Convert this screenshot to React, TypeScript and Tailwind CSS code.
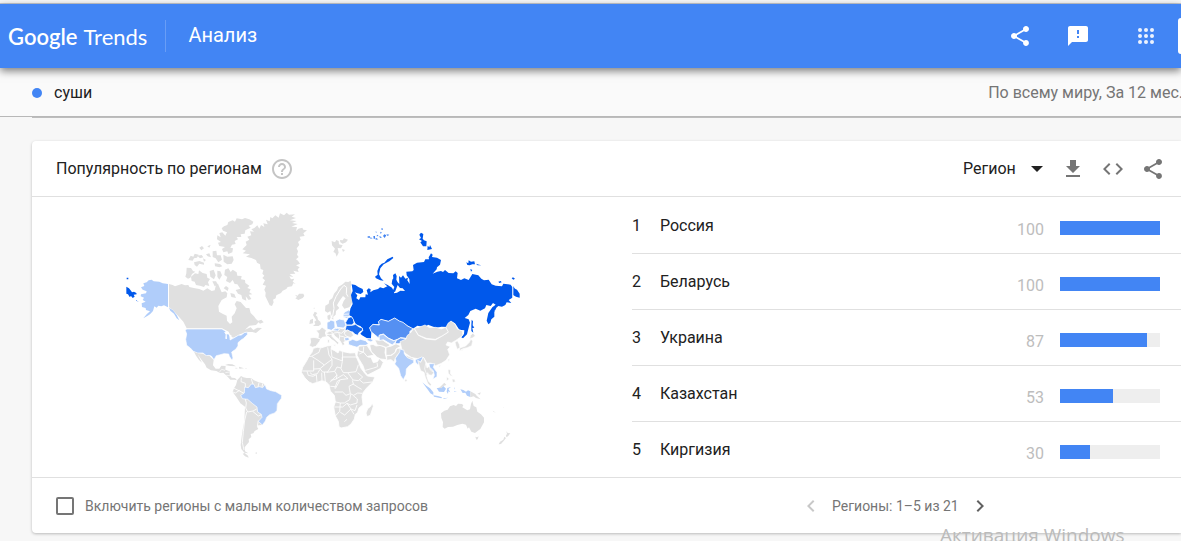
import { useState } from "react";
import {
  MdChevronLeft,
  MdChevronRight,
  MdCode,
  MdFeedback,
  MdGetApp,
  MdHelpOutline,
  MdShare,
} from "react-icons/md";

const regions = [
  { name: "Россия", value: 100 },
  { name: "Беларусь", value: 100 },
  { name: "Украина", value: 87 },
  { name: "Казахстан", value: 53 },
  { name: "Киргизия", value: 30 },
];

function AppsIcon() {
  return (
    <svg className="h-6 w-6" viewBox="0 0 24 24" fill="currentColor">
      {[6, 12, 18].map((y) =>
        [6, 12, 18].map((x) => <circle key={`${x}-${y}`} cx={x} cy={y} r="2" />)
      )}
    </svg>
  );
}

// ── World map ─────────────────────────────────────────────────────
function WorldMap() {
  return (
    <svg
      className="w-[410px] max-w-full"
      viewBox="0 0 1230 780"
      role="img"
      aria-label="Карта популярности по регионам"
      strokeLinejoin="round"
    >
      {/* Canada and the Arctic islands */}
      <g fill="#e0e0e0">
        <path d="M147 237L158 240L165 244L176 240L185 237L195 241L205 240L208 246L225 250L238 252L250 257L262 250L275 258L284 256L288 240L294 236L298 246L305 262L316 259L322 265L320 277L305 285L295 303L297 320L309 327L320 332L321 347L330 357L337 352L335 335L344 325L350 310L344 298L350 288L362 291L368 298L378 309L388 309L392 324L402 334L408 342L417 350L408 360L388 362L375 374L392 367L400 375L412 368L426 369L408 384L397 381L378 381L360 388L340 398L331 394L326 380L306 370L200 370L190 350L172 330L158 314L147 307Z" />
        <path d="M200 188L213 189L219 198L226 200L216 207L211 218L204 221L196 215L199 205Z" />
        <path d="M213 215L225 205L235 207L237 196L248 204L260 207L262 218L270 222L264 232L268 243L256 240L252 246L240 242L228 240L224 230L215 228Z" />
        <path d="M205 165L212 152L220 155L224 146L236 149L231 158L222 160L218 167Z M232 152L245 150L250 157L240 160ZM222 172L238 168L252 173L252 179L238 176L231 185L224 180Z M238 128L246 123L252 130L244 136ZM262 124L272 119L268 128ZM258 148L268 145L273 157L263 154ZM249 160L258 165L252 170Z" />
        <path d="M278 139L289 137L291 151L302 151L306 164L295 172L287 160L278 156ZM284 175L300 177L307 184L298 187L285 184ZM310 149L322 155L338 154L341 165L335 176L322 178L311 170Z M269 198L281 194L287 211L282 223L271 215ZM292 197L301 199L306 211L298 224L292 215ZM277 229L288 229L294 239L284 244Z" />
        <path d="M305 70L312 64L322 60L325 51L338 46L345 50L350 40L366 43L375 39L388 43L400 50L397 58L386 62L392 68L376 76L374 86L362 88L364 96L350 96L354 103L344 108L347 117L336 119L331 128L339 130L337 142L325 147L322 139L310 142L306 132L315 126L298 123L294 113L303 111L291 103L292 91L302 97L298 84L307 82L316 92L321 82L309 77Z" />
        <path d="M315 194L325 190L332 201L338 194L350 202L352 212L365 213L363 223L375 225L376 234L388 242L382 249L392 253L388 262L397 268L386 269L394 282L386 285L377 274L379 287L367 282L364 270L354 266L347 255L361 251L352 238L344 237L338 225L330 234L318 228L322 216L313 210Z M318 243L326 249L323 258L311 250ZM331 264L343 267L348 279L334 276Z" />
        <path d="M412 348L424 344L431 352L420 356Z" />
      </g>

      {/* Alaska and the easternmost tip of Russia */}
      <path
        fill="#b0cdfa"
        d="M70 235L80 232L86 226L95 224L101 229L118 230L128 235L144 237V307L132 301L124 304L115 302L110 308L103 304L99 318L90 328L82 333L70 340L80 328L90 319L78 315L77 309L66 306L65 295L77 290L68 285L72 278L62 274L63 268L78 265L80 259L68 254L63 247L73 243Z M147 308L159 316L170 330L178 346L170 340L162 326L151 317Z"
      />
      <path
        fill="#0058eb"
        d="M19 245L27 250L34 259L36 262L42 260L49 264L50 268L41 269L44 275L38 279L33 273L29 276L24 268L19 266ZM20 218h5v5h-5zM48 285l3 1v3zM51 287l5 3-4-1z"
      />

      {/* Greenland, Iceland, Svalbard and the north of Europe */}
      <g transform="translate(330 0)" fill="#e0e0e0">
        <path d="M50 120L37 133L48 137L38 145L60 148L48 155L64 159L78 165L81 173L90 178L92 192L100 195L97 206L103 212L97 219L105 226L98 239L108 242L103 254L107 263L106 274L113 288L119 301L126 303L131 292L129 284L137 280L139 271L153 264L158 257L169 252L173 246L186 244L190 235L197 236L188 230L193 221L183 223L178 214L190 216L179 207L196 206L190 197L206 201L203 193L209 187L198 181L210 176L204 167L198 163L206 156L201 149L204 139L200 130L208 120L204 111L212 104L209 95L224 93L220 85L231 76L220 74L217 68L205 71L198 79L201 66L184 65L203 57L186 54L200 48L180 46L198 39L185 35L195 28L177 29L170 23L162 31L150 25L146 38L136 31L127 40L121 36L119 49L108 44L113 58L100 55L103 66L93 60L88 71L82 61L73 69L64 73L72 80L60 79L64 91L52 95L58 104L47 110Z" />
        <path d="M195 269L203 272L207 266L220 266L223 273L218 279L205 285L196 280L201 276Z" />
        <path d="M305 108L315 112L319 105L326 108L327 118L338 121L333 130L323 129L326 143L320 155L316 144L310 141L315 131L306 121ZM330 105L338 106L342 100L354 104L348 112L338 116L331 112ZM336 132l9 3-6 6z" />
        <path d="M285 318L286 302L296 296L298 286L307 280L312 266L321 256L325 246L338 238L346 230L355 231L362 227L364 236L362 250L366 270L369 284L364 298L358 307L343 311L336 301L341 288L347 280L339 273L333 281L326 292L321 301L328 309L318 318L317 329L309 336L304 331L301 318L293 323Z" />
        <path d="M292 332L301 328L302 338L298 346L293 342ZM304 339l6-2v7z" />
        <path d="M254 320L262 324L257 331L262 335L264 344L271 350L273 358L266 363L249 363L256 357L253 350L259 346L253 337L249 330ZM240 345L249 341L249 355L238 357ZM250 309l4-1-1 4z" />
        <path d="M308 333L312 310L310 294L318 275L332 252L342 241L350 247L349 266L354 275" fill="none" stroke="#fff" strokeWidth="3" />
      </g>

      {/* Continental Europe, Turkey, Middle East, Africa */}
      <g transform="translate(510 315)" fill="#e0e0e0" stroke="#fff" strokeWidth="2.5">
        <path d="M60 84L72 82L92 86L89 94L82 103L78 109L67 112L58 107L62 96Z" />
        <path d="M78 61L89 59L96 51L109 61L106 69L110 80L98 82L92 87L84 84L86 71Z" />
        <path d="M108 76L119 70L126 72L126 79L136 89L147 98L142 104L136 96L124 88L116 80ZM128 104l10-1-2 6zM113 89l5-1v10l-5 1z" />
        <path d="M107 70L120 63L133 61L134 53L148 54L158 56L168 53L178 60L186 73L178 77L177 82L166 85L163 89L169 94L161 96L165 103L158 107L152 96L146 87L134 78L130 71L118 74Z" />
        <path fill="none" d="M132 69L146 67L154 70L160 65L177 69M146 67L149 78L160 80L168 84M149 78L148 88M160 65L168 55M120 63L131 71" />
        <path fill="#b0cdfa" d="M111 37L119 34L122 30L134 34L135 53L124 61L111 57ZM136 33L148 27L163 30L168 47L160 54L141 52Z" />
        <path fill="#b0cdfa" d="M159 13L164 6L176 0L182 2L182 11L176 20L171 25L160 22Z M163 84L176 82L178 91L166 93Z M130 58l12-3 7 3-6 5-12-1z" />
        <path fill="none" d="M158 13L180 12M160 19L177 19" />
        <path fill="#b0cdfa" d="M175 94L188 88L200 92L212 88L227 92L235 101L228 106L210 106L201 112L188 108L176 104ZM230 85L242 86L250 91L243 96L233 92Z" />
        <path d="M239 105L249 103L258 108L272 106L287 113L285 128L290 149L272 147L260 141L253 133L244 126Z" />
        <path d="M254 89L267 91L274 87L286 96L301 105L290 113L278 108L262 105Z" />
        <path d="M288 112L304 108L318 101L333 108L318 117L315 128L302 136L288 136Z" />
        <path d="M290 137L305 136L316 127L321 115L337 115L333 125L323 134L315 147L313 157L303 149L290 151Z" />
        <path d="M205 109L231 106L242 123L252 136L242 137L231 140L222 128L205 122Z" />
        <path d="M203 122L221 127L233 141L243 142L250 158L262 155L268 146L280 157L272 175L249 187L233 195L225 185L219 167L208 149L201 136Z" />
        <path fill="none" d="M221 110L220 126L208 132M226 181L251 174L263 170L261 158" />
        <path d="M70 115L82 112L95 113L111 108L125 106L123 117L134 122L144 129L148 121L160 125L180 129L196 128L199 141L206 157L213 175L223 188L232 198L255 201L248 216L230 234L219 248L216 260L219 284L207 294L203 307L196 313L193 327L183 342L173 350L153 354L147 350L145 334L136 318L131 291L136 276L133 256L121 243L117 224L108 215L95 212L82 217L68 221L57 216L45 204L34 187L38 172L51 151L58 137L66 127Z" />
        <path fill="none" d="M91 114L87 127L65 139L53 139M65 139L84 151L103 165L126 148L117 135L113 112M123 118L126 141L157 153L158 126M157 153V141H203M126 148L126 166L113 186L98 186L90 176L103 165M71 151V183H37M71 177L90 176M90 178L82 191L67 194L60 188M51 184L55 196L69 199L79 194L81 216M95 188L96 212M103 186L106 214M110 187L134 184L141 195L120 217M157 154L153 176L160 188L174 188L198 185L205 164M134 184L141 171L153 174M141 195L139 207L122 211M138 207L160 194L174 206L151 209L142 214L134 235M174 189L189 210L205 212L218 201L203 188M187 211L190 222L177 229L181 251L168 256L158 246L134 246M150 210L136 236M189 222L206 233L215 238M181 251L191 256L203 249L216 250M182 253L179 269L163 279L151 279L133 275M190 257L202 267L201 279L181 285L171 280M151 279L149 304L136 318M133 291L158 291L171 280L183 297L164 315L151 307M183 297L195 302L201 285M183 298L192 313M209 210L220 219L246 216M121 229L137 230M163 335L171 328" />
        <path d="M247 279L250 289L241 316L231 320L228 309L233 296L242 289Z" />
      </g>

      {/* Russia and its neighbours */}
      <g transform="translate(660 30)" fill="#0058eb">
        <path d="M35 208L46 210L55 216L68 222L70 231L62 237L50 234L44 232L52 241L49 250L57 255L61 247L76 247L77 238L84 239L80 226L86 220L92 223L91 232L100 226L114 222L120 217L130 220L142 214L151 221L140 212L132 205L143 210L156 218L160 226L163 235L171 233L181 227L195 228L188 220L180 219L173 210L165 231L158 229L163 216L155 206L157 194L160 190L159 180L166 175L170 183L169 194L173 202L178 207L177 183L183 188L189 181L196 191L204 188L202 196L209 207L208 192L200 181L199 170L217 169L221 165L219 150L231 143L252 141L256 133L267 133L266 127L273 115L278 119L276 126L291 128L303 135L300 149L291 157L290 163L278 176L292 170L303 168L309 171L315 165L326 174L340 175L347 169L353 174L351 190L363 195L373 190L386 195L397 177L415 181L424 191L432 196L446 194L455 208L467 212L486 214L490 206L512 209L517 216V248L506 255L514 264L500 262L496 270L486 275L475 273L469 278L463 291L463 305L454 313L451 323L445 328L440 317L445 294L457 277L467 269L459 264L452 273L439 270L435 280L421 287L407 281L391 288L385 300L374 309L386 313L390 323L385 342L381 358L369 370L364 367L372 357L373 346L358 344L345 325L333 319L325 326L325 336L305 335L288 338L264 329L256 337L232 332L218 342L205 333L189 324L178 318L164 309L145 318L122 313L118 328L99 327L88 338L94 350L93 370L80 369L66 361L61 356L70 346L62 334L48 328L42 318L36 305L28 301L31 281L38 267L33 240L38 228Z" />
        <path d="M519 213L525 221L531 224L539 236V248L528 245L519 240Z" />
        <path d="M105 185L113 179L112 168L118 153L125 146L133 143L142 133L158 125L160 129L148 139L131 148L121 160L117 178L123 190L131 197L121 196L108 190Z" />
        <path d="M238 59L243 53L250 57L248 71L252 76L260 79L259 94L249 94L241 82L246 78L237 73L243 69ZM263 92L268 97L270 90L276 102L262 105Z" />
        <path d="M379 142L385 145L386 136L393 140L403 139L405 148L397 148L389 151L382 150ZM408 146L417 149L424 151L413 151ZM391 162L397 165L393 170ZM515 190L519 187L525 191L520 194ZM475 200l7-2 3 4-7 2z" />
        <path d="M395 314L399 319L398 331L403 338L397 339L400 353L394 348L394 331Z" />
        <path opacity=".75" d="M83 64h7v4h-7zM91 67l7 3-7 1zM100 63h5v8h-4zM107 68l8 5-8 1zM111 59l5 4-6 1zM118 63l8 4-6 2zM121 50l5 3-5 3zM129 63l4-5 6 3-5 8zM139 58l9 1-5 4zM124 40h4v5h-3zM107 49l3 2-2 3z" />
        <path d="M149 327l5-1M463 286l2 2" stroke="#fff" />
        <g stroke="#fff" strokeWidth="2.5" strokeLinejoin="round">
          <path fill="#0b60ec" d="M17 322L25 308L34 305L40 313L42 322L37 330L19 330Z" />
          <path fill="#1969ed" d="M15 347L19 331L36 331L47 328L56 335L67 339L68 346L58 352L53 361L45 358L37 350L30 353L23 345Z" />
          <path fill="#5590f2" d="M89 338L99 328L118 330L115 320L123 313L145 319L164 309L178 318L189 322L203 333L219 341L209 350L211 357L199 370L182 368L163 378L145 369L130 357L119 360L116 369L103 358L93 350Z" />
          <path fill="#b0cdfa" d="M117 361L130 358L145 370L161 377L171 374L164 383L157 390L143 382L130 374L118 377Z" />
          <path fill="#79a8f5" d="M169 376L181 369L202 371L190 379L177 386L165 386Z" />
          <path fill="#e0e0e0" d="M23 345L35 351L41 361L32 368L18 363L12 354Z" />
        </g>
        <path d="M519 213V250" stroke="#fff" strokeWidth="2" />
      </g>

      {/* East and South Asia, Oceania */}
      <g transform="translate(780 315)" fill="#e0e0e0" stroke="#fff" strokeWidth="2">
        <path d="M60 95L78 87L81 77L91 69L102 55L115 76L138 87L166 90L186 78L204 67L198 52L204 40L213 33L225 42L232 57L247 63L248 76L238 84L226 92L214 99L203 96L198 105L211 110L203 118L209 134L198 151L184 160L167 167L153 159L141 160L132 144L112 146L94 142L79 132L66 120Z" />
        <path d="M103 55L119 51L135 45L149 53L167 52L184 57L197 52L205 66L186 78L166 88L139 85L115 75Z" />
        <path fill="#b0cdfa" d="M51 138L59 126L60 117L72 121L73 132L81 140L101 148L101 158L87 168L79 177L78 193L70 209L62 197L56 175L44 162L48 154L46 145ZM106 149L125 141L130 143L122 155L114 164L107 157Z" />
        <path d="M75 134L91 142L100 145L99 150L82 143ZM76 207L82 210L78 216L74 213Z" />
        <path d="M113 151L122 157L130 141L137 157L141 174L148 169L158 181L162 188L154 196L146 194L143 188L140 197L145 213L154 223L151 229L143 220L136 202L132 187L122 182Z" />
        <path fill="none" d="M137 160L134 177L140 193M148 169L151 180L160 186" />
        <path fill="#b0cdfa" d="M147 161L164 161L160 172L171 187L171 200L158 208L163 196L160 182L149 172Z" />
        <path d="M176 168l6-2-3 6zM204 148l5-2-3 11zM204 178L212 180L211 191L218 199L211 197L205 190ZM216 207L224 208L226 216L218 217ZM200 200l8 7-8 6z" />
        <path d="M225 97L232 92L238 103L240 113L232 118L228 108ZM272 76L279 69L286 78L277 84L269 86ZM273 86L278 94L275 107L262 113L249 116L239 123L239 114L257 108L268 97ZM243 119l8-1-5 5z" />
        <path fill="#b0cdfa" stroke="none" d="M127 217L139 227L150 235L160 247L160 255L151 250L142 237ZM160 256L174 258L186 262L184 265L162 260ZM190 265l15-2-14 4zM170 234L183 234L190 228L198 236L192 246L177 245ZM202 234L213 231L205 237L211 247L205 244L204 252L200 245ZM222 230l3 8-2-1zM222 244l9 1-8 1zM241 238L250 240L258 245L264 241L271 244V261L261 257L256 248L248 249Z" />
        <path stroke="none" d="M174 232L181 230L193 218L199 225L190 228L184 235ZM271 244L286 252L290 257L302 268L288 264L281 259L271 262ZM292 251l10-4-2 7zM307 259l4 4M315 267l7 4z" />
        <path stroke="none" d="M183 310L193 302L203 299L210 289L221 285L228 288L234 281L246 282L250 286L247 292L262 301L270 298L273 282L277 272L281 288L289 292L292 305L303 313L312 323L312 337L301 357L285 369L274 365L267 352L263 356L258 344L247 341L232 345L219 350L204 351L194 356L188 351L189 336L184 324Z M286 380L291 382L296 379L293 388L289 389ZM379 363L383 369L391 370L384 379L379 382L378 376L381 372ZM373 380L378 384L371 393L363 402L356 403L360 395L370 389ZM338 302l10 6-8-3zM369 291l2 1-1 1z" />
      </g>

      {/* The Americas */}
      <g transform="translate(180 345)" fill="#e0e0e0">
        <path fill="#b0cdfa" stroke="#fff" strokeWidth="2" d="M20 27L126 27L137 34L137 40L146 42L151 51L150 60L165 52L175 46L184 45L193 38L202 36L202 44L191 55L182 61L174 68L174 78L167 88L155 96L159 114L156 121L148 109L146 102L132 101L118 105L109 107L102 119L94 108L87 106L79 107L69 99L53 99L40 94L31 84L20 76L17 58L20 42L16 31Z" />
        <path fill="#fff" d="M132 36L144 38L150 42L140 43L141 57L136 56L137 43ZM148 42L156 48L149 56Z" />
        <path d="M42 95L54 100L69 101L79 108L88 107L101 120L99 136L107 146L118 146L124 137L137 138L136 149L149 154L149 165L155 173L165 174L171 181L163 179L151 179L140 167L130 158L120 159L109 153L93 151L80 143L75 133L65 120L53 103L60 117L66 128L57 120L48 107Z" />
        <path d="M135 135L145 132L157 133L168 139L151 138ZM166 143l8 1-7 2zM177 140l15 5-14 1zM196 145l6 1-5 1z" />
        <path fill="none" stroke="#fff" strokeWidth="2" d="M118 157L125 148L135 151M136 158L149 156M139 166L150 167" />
        <path d="M172 180L183 168L190 172L200 174L213 174L222 181L236 187L249 190L256 197L260 207L273 212L287 215L304 225L304 235L292 251L291 271L284 279L269 284L260 292L256 303L247 315L235 316L231 320L235 327L224 333L220 340L212 342L214 351L206 358L207 366L200 374L194 382L195 394L205 400L193 398L184 387L182 375L185 350L188 329L193 303L195 260L181 250L169 231L158 216L162 205L168 195Z M194 399l10 8 2 6-11-4-7-8zM225 399l6-2-1 5z" />
        <path fill="none" stroke="#fff" strokeWidth="2.5" d="M184 173L183 185L196 190L196 204M162 205L179 213L192 220M159 216L166 219L179 211M213 175L219 192M237 188L234 201M248 190L246 202M195 234L199 249L197 264L203 276L219 273L230 267M218 274L235 288L244 284M200 276L194 301L190 335L187 368L192 390M235 302L232 319" />
        <path fill="#b0cdfa" stroke="#fff" strokeWidth="2" d="M194 201L205 203L214 192L222 193L226 203L239 200L248 203L255 194L260 207L273 212L287 215L305 226L304 235L292 251L291 271L284 279L269 284L260 292L256 303L247 315L235 304L246 292L244 283L233 276L231 261L218 251L203 238L187 236L182 226L193 219Z" />
      </g>
    </svg>
  );
}

function Header() {
  return (
    <header className="relative z-20 flex h-16 shrink-0 items-center bg-[#4285f4] pl-2 text-white shadow-[0_3px_8px_rgba(0,0,0,0.5)]">
      <a href="#home" className="flex items-baseline gap-1.5 pt-0.5 font-[Lato,sans-serif] text-[22px] leading-8">
        <span className="font-semibold">Google</span>
        <span>Trends</span>
      </a>
      <div className="ml-[18px] h-8 w-px bg-[#689df6]" />
      <h1 className="ml-[22px] pb-0.5 text-xl leading-8">Анализ</h1>
      <div className="ml-auto flex shrink-0 items-center">
        <button aria-label="Поделиться" className="mr-[34px]">
          <MdShare size={24} />
        </button>
        <button aria-label="Отправить отзыв" className="mr-11">
          <MdFeedback size={24} />
        </button>
        <button aria-label="Приложения" className="mr-5 opacity-90">
          <AppsIcon />
        </button>
        <div className="h-9 w-[3px] rounded-l bg-white" />
      </div>
    </header>
  );
}

export default function App() {
  const [showLowVolume, setShowLowVolume] = useState(false);

  return (
    <div className="relative flex min-h-screen flex-col overflow-hidden bg-[#f7f7f7] font-[Roboto,sans-serif] text-base text-[#212121]">
      <div className="h-1 shrink-0 border-b border-[#c8cad0]" />
      <Header />

      {/* Search term */}
      <div className="relative z-10 flex h-[49px] shrink-0 items-center border-b border-[#b8b8b8] bg-[#fafafa] pl-8 pt-px">
        <span className="h-2.5 w-2.5 rounded-full bg-[#4285f4]" />
        <span className="ml-3">суши</span>
        <span className="-mr-0.5 ml-auto whitespace-nowrap text-[#757575]">
          По всему миру, За 12 мес.
        </span>
      </div>
      <div className="ml-8 h-px shrink-0 bg-[#bdbdbd]" />

      {/* Interest by region */}
      <main className="ml-8 mt-[23px] rounded-l-sm bg-white shadow-[0_1px_3px_rgba(0,0,0,0.25)]">
        <div className="flex h-14 items-center border-b border-[#e0e0e0] pl-6">
          <h2>Популярность по регионам</h2>
          <button aria-label="Справка" className="ml-2 text-[#c4c4c4]">
            <MdHelpOutline size={24} />
          </button>
          <div className="ml-auto flex items-center gap-4 pr-4 text-[#757575]">
            <div className="relative">
              <select
                aria-label="Детализация"
                className="w-[82px] appearance-none bg-transparent text-[#212121] outline-none"
              >
                <option>Регион</option>
                <option>Город</option>
              </select>
              <svg
                className="pointer-events-none absolute right-0.5 top-1/2 h-1.5 w-3 -translate-y-1/2"
                viewBox="0 0 12 6"
                fill="#212121"
              >
                <path d="M0 0h12L6 6z" />
              </svg>
            </div>
            <button aria-label="Скачать">
              <MdGetApp size={24} />
            </button>
            <button aria-label="Код для вставки">
              <MdCode size={24} />
            </button>
            <button aria-label="Поделиться картой">
              <MdShare size={24} />
            </button>
          </div>
        </div>

        <div className="grid grid-cols-[600fr_549fr]">
          <div className="flex items-start justify-center pr-3.5 pt-2">
            <WorldMap />
          </div>
          <ol>
            {regions.map((region, i) => (
              <li
                key={region.name}
                className="flex h-14 items-center border-t border-[#e0e0e0] pr-[21px] first:border-transparent"
              >
                <span className="w-7">{i + 1}</span>
                <span>{region.name}</span>
                <span className="ml-auto pt-2 text-[#bdbdbd]">{region.value}</span>
                <div className="ml-4 mt-1 h-3.5 w-[100px] bg-[#eee]">
                  <div className="h-full bg-[#4285f4]" style={{ width: `${region.value}%` }} />
                </div>
              </li>
            ))}
          </ol>
        </div>

        <footer className="grid h-14 grid-cols-[771fr_378fr] items-center border-t border-[#e0e0e0] text-sm text-[#757575]">
          <label className="flex items-center pl-6">
            <input
              type="checkbox"
              checked={showLowVolume}
              onChange={(e) => setShowLowVolume(e.target.checked)}
              className="mr-[11px] h-[18px] w-[18px] appearance-none rounded-xs border-2 border-[#757575] checked:bg-[#757575]"
            />
            Включить регионы с малым количеством запросов
          </label>
          <div className="-ml-1 flex items-center gap-[9px]">
            <button aria-label="Назад" disabled className="text-[#c8c8c8]">
              <MdChevronLeft size={24} />
            </button>
            <span>Регионы: 1–5 из 21</span>
            <button aria-label="Вперёд" className="text-[#616161]">
              <MdChevronRight size={24} />
            </button>
          </div>
        </footer>
      </main>

      {/* Desktop watermark */}
      <div className="pointer-events-none absolute left-[940px] top-[521px] whitespace-nowrap font-['Open_Sans',sans-serif] text-[19px] leading-7 text-[#bbb]">
        Активация Windows
      </div>
    </div>
  );
}
